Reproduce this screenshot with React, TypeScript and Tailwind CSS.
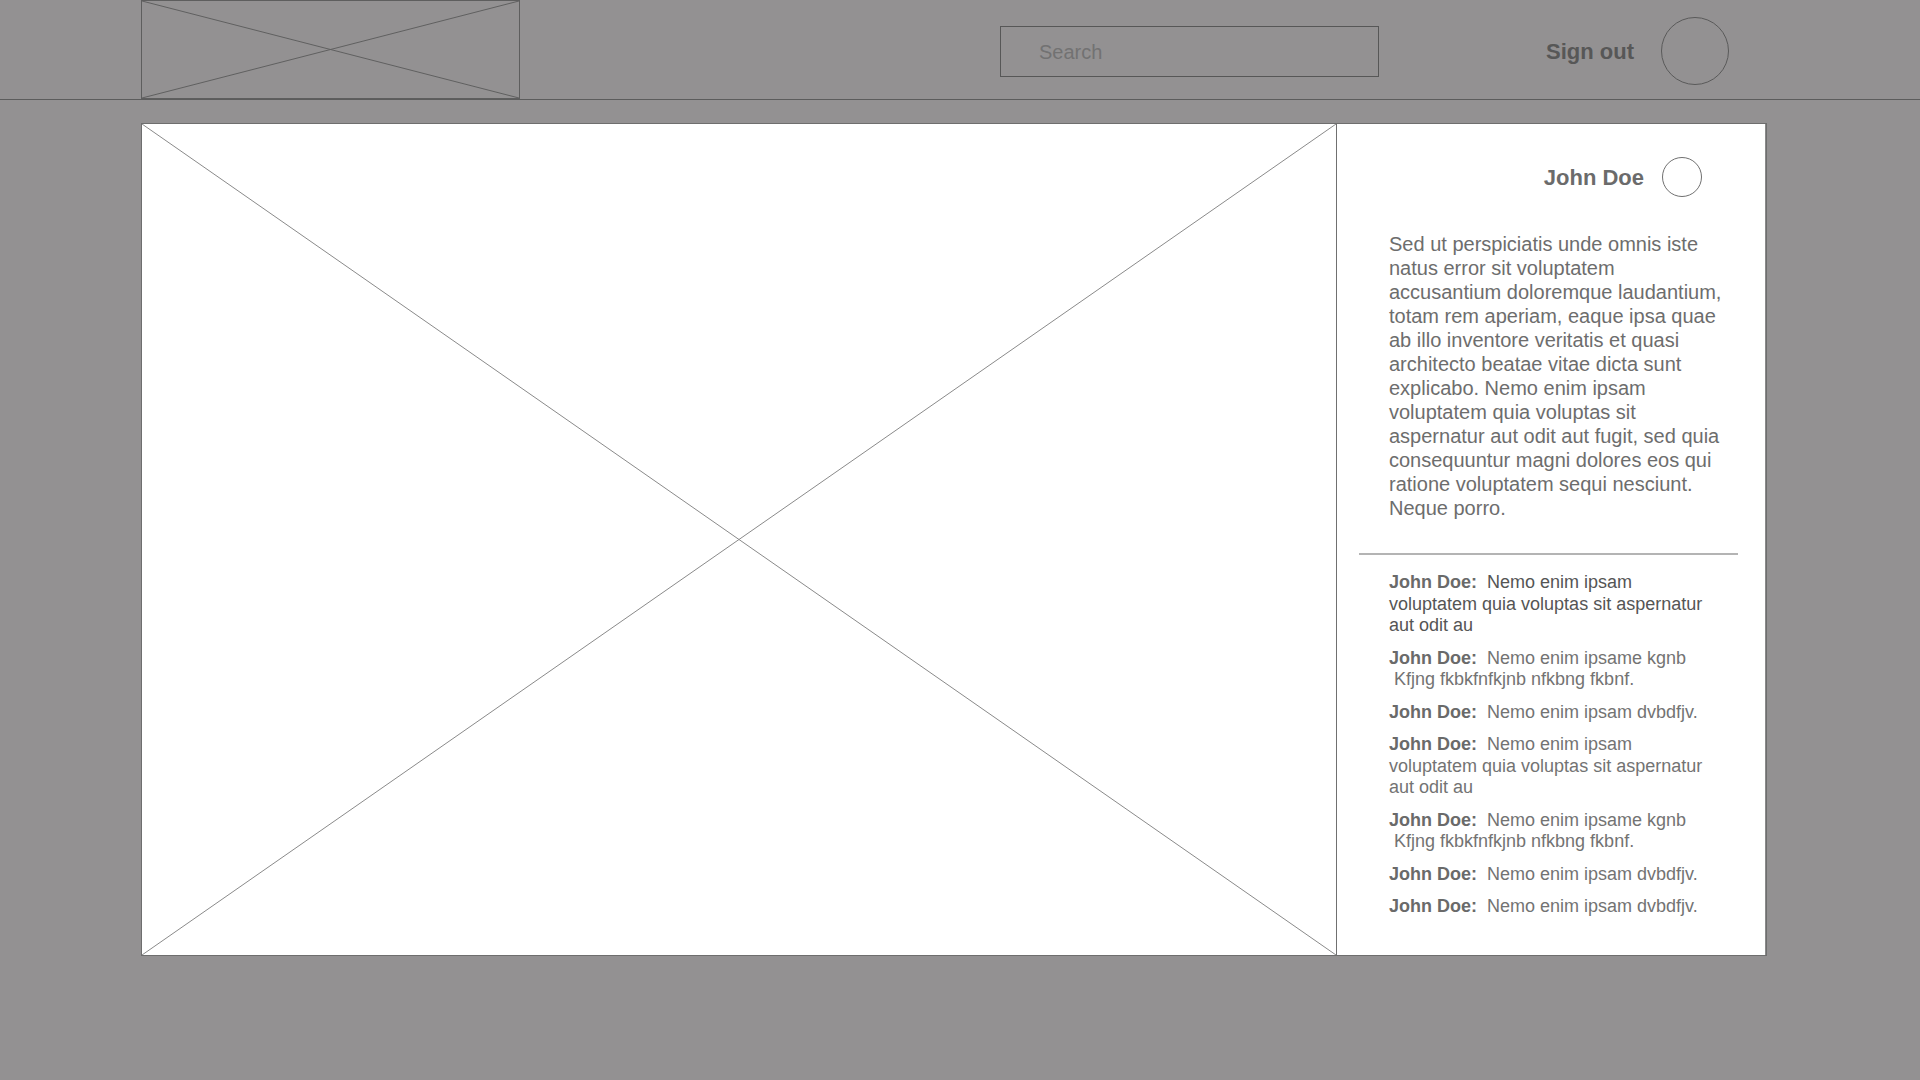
import React from "react";

function XBox({ color }: { color: string }) {
  return (
    <svg className="absolute inset-0 h-full w-full" viewBox="0 0 100 100" preserveAspectRatio="none">
      <line x1="0" y1="0" x2="100" y2="100" stroke={color} strokeWidth="1" vectorEffect="non-scaling-stroke" />
      <line x1="100" y1="0" x2="0" y2="100" stroke={color} strokeWidth="1" vectorEffect="non-scaling-stroke" />
    </svg>
  );
}

type Comment = { lines: string[]; dark?: boolean };

const comments: Comment[] = [
  { lines: ["Nemo enim ipsam", "voluptatem quia voluptas sit aspernatur", "aut odit au"], dark: true },
  { lines: ["Nemo enim ipsame kgnb", "\u00a0Kfjng fkbkfnfkjnb nfkbng fkbnf."] },
  { lines: ["Nemo enim ipsam dvbdfjv."] },
  { lines: ["Nemo enim ipsam", "voluptatem quia voluptas sit aspernatur", "aut odit au"] },
  { lines: ["Nemo enim ipsame kgnb", "\u00a0Kfjng fkbkfnfkjnb nfkbng fkbnf."] },
  { lines: ["Nemo enim ipsam dvbdfjv."] },
  { lines: ["Nemo enim ipsam dvbdfjv."] },
];

const paragraph = [
  "Sed ut perspiciatis unde omnis iste",
  "natus error sit voluptatem",
  "accusantium doloremque laudantium,",
  "totam rem aperiam, eaque ipsa quae",
  "ab illo inventore veritatis et quasi",
  "architecto beatae vitae dicta sunt",
  "explicabo. Nemo enim ipsam",
  "voluptatem quia voluptas sit",
  "aspernatur aut odit aut fugit, sed quia",
  "consequuntur magni dolores eos qui",
  "ratione voluptatem sequi nesciunt.",
  "Neque porro.",
];

export default function App() {
  return (
    <div className="min-h-screen w-full bg-[#939192] font-['Liberation_Sans',Arial,sans-serif]">
      <header className="flex h-[100px] items-start border-b border-[#5c5c5c] pl-[141px]">
        <div className="relative h-[99px] w-[379px] border border-[#5e5e5e]">
          <XBox color="#606060" />
        </div>
        <div className="ml-[480px] mt-[26px] flex h-[51px] w-[379px] items-center border border-[#575757] pl-[38px] text-[20px] font-light text-[#727272]">
          Search
        </div>
        <div className="ml-[167px] mt-[17px] flex items-center">
          <span className="text-[22px] font-bold text-[#575757]">Sign out</span>
          <div className="ml-[27px] h-[68px] w-[68px] rounded-full border border-[#5a5a5a]" />
        </div>
      </header>

      <main className="pl-[141px] pt-[23px]">
        <div className="flex h-[833px] w-[1626px] border border-[#6e6e6e] bg-white">
          <div className="relative w-[1195px] border-r border-[#707070]">
            <XBox color="#8a8a8a" />
          </div>
          <div className="flex flex-1 flex-col border-r border-[#8a8a8a]">
            <div className="flex items-center justify-end gap-[18px] pr-[63px] pt-[33px]">
              <span className="text-[22px] font-bold text-[#6b6b6b]">John Doe</span>
              <div className="h-[40px] w-[40px] rounded-full border border-[#707070]" />
            </div>
            <div className="ml-[52px] mt-[35px] flex flex-col text-[20px] leading-[24px] text-[#6d6d6d]">
              {paragraph.map((l, i) => (
                <span key={i} className="whitespace-nowrap">{l}</span>
              ))}
            </div>
            <div className="ml-[22px] mr-[27px] mt-[33px] h-[2px] bg-[#b4b4b4]" />
            <div className="ml-[52px] mt-[17px] flex flex-col gap-[11px]">
              {comments.map((c, i) => (
                <div key={i} className="flex flex-col text-[18px] leading-[21.5px]">
                  {c.lines.map((l, j) => (
                    <span key={j} className="whitespace-pre">
                      {j === 0 && <span className="font-bold text-[#6a6a6a]">{"John Doe:\u00a0\u00a0"}</span>}
                      <span className={c.dark ? "text-[#555555]" : "text-[#737373]"}>{l}</span>
                    </span>
                  ))}
                </div>
              ))}
            </div>
          </div>
        </div>
      </main>
    </div>
  );
}
